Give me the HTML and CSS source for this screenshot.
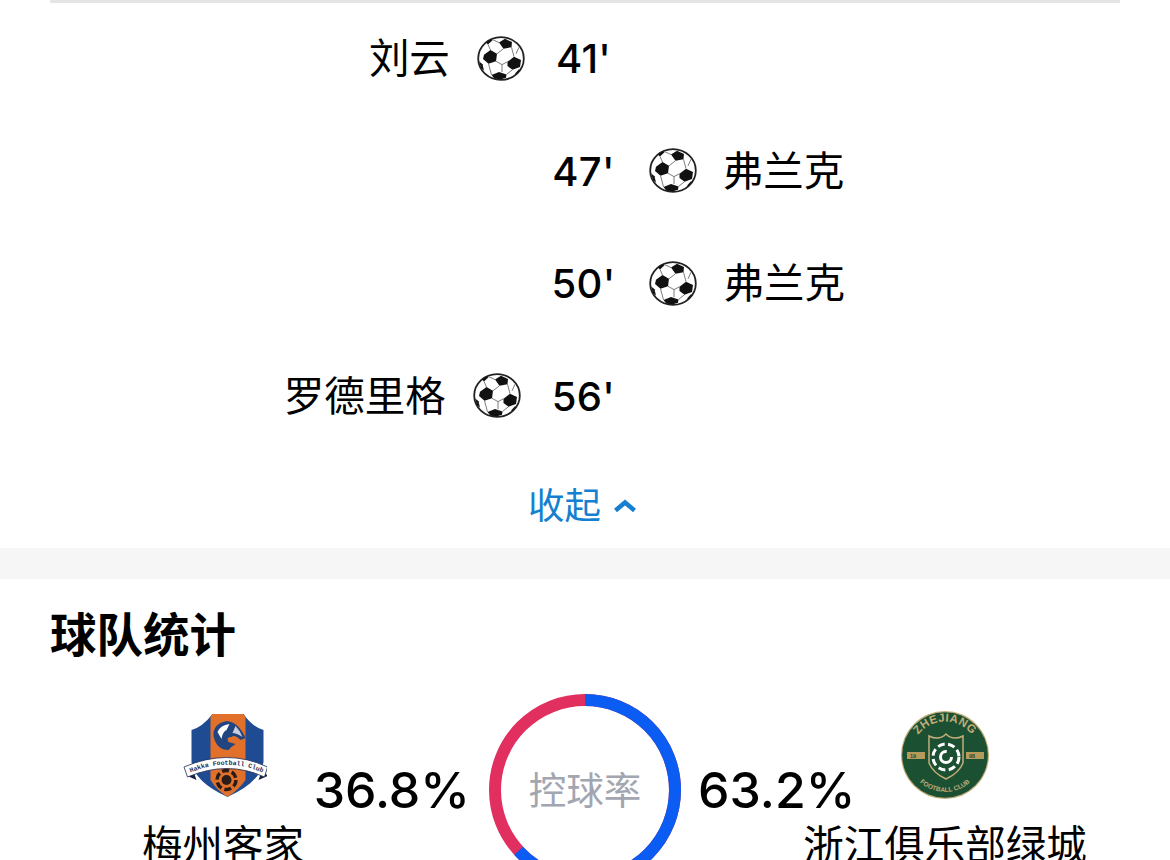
FILE: index.html
```html
<!DOCTYPE html>
<html lang="zh">
<head>
<meta charset="utf-8">
<title>球队统计</title>
<link rel="stylesheet" href="styles.css">
</head>
<body>
<svg class="defs" width="0" height="0" aria-hidden="true">
  <symbol id="ball" viewBox="0 0 48 48" preserveAspectRatio="none">
    <circle cx="24" cy="24" r="22.800" fill="#fff" stroke="#222" stroke-width="1.800"/>
    <g fill="#111">
      <path d="M22 7 28 3 35 6.500 34.500 12 26.500 13.500 Z"/>
      <path d="M7 20 13.500 15 20 19 19 27 11.500 29.500 6 24.500 Z"/>
      <path d="M30.500 27.500 37 22 44 25.500 43 33 35.500 36 30.500 32 Z"/>
      <path d="M14.500 41.500 22 38.500 29.500 41 29 44.500 24 46 17.500 45.500 Z"/>
      <path d="M2 27 4 34 7 37 5.500 30 Z"/>
      <path d="M9 7 13 4 16 4 11 9 Z"/>
      <path d="M38 40 42 35.500 43 36 39.500 40.500 Z"/>
    </g>
    <g fill="none" stroke="#555" stroke-width="0.800">
      <path d="M20 19 26.500 13.500 M34.500 12 37 22 M30.500 27.500 25 30.500 19 27 M25 30.500 25 38.500 M11.500 29.500 14.500 41.500 M35.500 36 29.500 41 M13.500 15 11 9 M22 7 16 4 M39 19 42 12"/>
    </g>
  </symbol>
</svg>

<main class="page">
  <section class="events">
    <div class="event">
      <div class="side side-home"><span class="player">刘云</span><svg class="ball"><use href="#ball"/></svg></div>
      <span class="minute">41'</span>
      <div class="side"></div>
    </div>
    <div class="event">
      <div class="side"></div>
      <span class="minute">47'</span>
      <div class="side side-away"><svg class="ball"><use href="#ball"/></svg><span class="player">弗兰克</span></div>
    </div>
    <div class="event">
      <div class="side"></div>
      <span class="minute">50'</span>
      <div class="side side-away"><svg class="ball"><use href="#ball"/></svg><span class="player">弗兰克</span></div>
    </div>
    <div class="event">
      <div class="side side-home"><span class="player">罗德里格</span><svg class="ball"><use href="#ball"/></svg></div>
      <span class="minute">56'</span>
      <div class="side"></div>
    </div>
    <div class="collapse">
      <span>收起</span>
      <svg class="chevron" viewBox="0 0 26 16"><path d="M3.500 12.500 13 4.500 22.500 12.500" fill="none" stroke="#1580d0" stroke-width="4.500"/></svg>
    </div>
  </section>

  <div class="band"></div>

  <section class="stats">
    <h2 class="stats-title">球队统计</h2>
    <div class="possession">
      <div class="team">
        <svg class="crest crest-home" viewBox="0 0 88 88">
          <g transform="translate(3.500 3)">
            <path d="M9 16 Q20 13 30 0 L61 0 Q70 13 81 16 L81 48 Q78 68 45 83 Q12 68 9 48 Z" fill="#1f4b93"/>
            <path d="M28 3 L30 0 61 0 63 3 63 66 Q56 76 45 83 Q34 76 28 66 Z" fill="#e0702a"/>
            <path d="M31 22 Q30 10 44 7 Q56 8 63 24 L58 26 Q52 20 49 23 Q43 23 46 28 L53 30 Q48 33 46 36 Q34 36 31 22 Z" fill="#22457f"/>
            <path d="M35 18 Q38 11 47 10 L44 16 Q40 18 39 25 Z" fill="#fff"/>
            <path d="M53 12 Q58 17 60 23 Q54 19 50 19 Z" fill="#c8cedb"/>
            <path d="M5 62 10 55 14 66 Z M85 62 80 55 76 66 Z" fill="#16233f"/>
            <path d="M1.500 53 Q45 34 85 53 L82 63 Q45 46 5 63 Z" fill="#fff" stroke="#1c2b52" stroke-width="0.800"/>
            <path id="bannerArc" d="M6 59.500 Q45 42 82 59.500" fill="none"/>
            <text class="crest-banner"><textPath href="#bannerArc" startOffset="50%" text-anchor="middle">Hakka Football Club</textPath></text>
            <circle cx="44" cy="66" r="9.500" fill="none" stroke="#2a1c18" stroke-width="3.500" stroke-dasharray="7 3"/>
            <circle cx="44" cy="66" r="5" fill="#2a1c18"/>
          </g>
        </svg>
        <span class="team-name">梅州客家</span>
      </div>
      <div class="percent percent-home">36.8%</div>
      <div class="ring">
        <svg class="ring-chart" viewBox="0 0 192 192">
          <circle class="ring-red" cx="96" cy="96" r="90"/>
          <circle class="ring-blue" cx="96" cy="96" r="90" pathLength="100" stroke-dasharray="63.2 36.8" transform="rotate(-90 96 96)"/>
        </svg>
        <span class="ring-label">控球率</span>
      </div>
      <div class="percent percent-away">63.2%</div>
      <div class="team">
        <svg class="crest" viewBox="0 0 88 88">
          <circle cx="44" cy="44" r="44" fill="#c2ad78"/>
          <circle cx="44" cy="44" r="42.800" fill="#1b5032"/>
          <path id="arcTop" d="M10.500 44 A33.500 33.500 0 0 1 77.500 44" fill="none"/>
          <path id="arcBottom" d="M7 44 A37 37 0 0 0 81 44" fill="none"/>
          <text class="crest-top"><textPath href="#arcTop" startOffset="50%" text-anchor="middle">ZHEJIANG</textPath></text>
          <text class="crest-bottom"><textPath href="#arcBottom" startOffset="50%" text-anchor="middle">FOOTBALL CLUB</textPath></text>
          <rect x="6" y="41" width="18" height="7" fill="#b59a5c"/>
          <rect x="65" y="41" width="18" height="7" fill="#b59a5c"/>
          <path d="M28 25 Q38 30 45 23 Q52 30 62 25 L62 52 Q58 62 45 68 Q32 62 28 52 Z" fill="#1b5032" stroke="#c2ad78" stroke-width="1.500"/>
          <text class="crest-year" x="12" y="46.500">19</text>
          <text class="crest-year" x="71" y="46.500">98</text>
          <circle cx="45" cy="46" r="13" fill="none" stroke="#fff" stroke-width="3" stroke-dasharray="7 3.500"/>
          <circle cx="45" cy="46" r="5.500" fill="none" stroke="#fff" stroke-width="3" stroke-dasharray="26 9"/>
        </svg>
        <span class="team-name">浙江俱乐部绿城</span>
      </div>
    </div>
  </section>
</main>
</body>
</html>
```

FILE: styles.css
```css
html, body {
  margin: 0;
  height: 860px;
  overflow: hidden;
  background: #fff;
}

body {
  font-family: Inter, "Noto Sans CJK SC", sans-serif;
  color: #000;
}

.defs {
  display: block;
  height: 0;
}

.page {
  display: flex;
  flex-direction: column;
}

.events {
  margin: 0 50px;
  border-top: 3px solid #e5e5e5;
  height: 545px;
  display: flex;
  flex-direction: column;
}

.event {
  height: 112.500px;
  margin-top: -1px;
  margin-bottom: 1px;
  display: grid;
  grid-template-columns: 1fr auto 1fr;
  align-items: center;
  font-size: 40px;
  line-height: 56px;
}

.side {
  display: flex;
  align-items: center;
}

.side-home {
  justify-content: flex-end;
  gap: 27px;
}

.side-away {
  gap: 26px;
}

.player {
  padding-top: 2px;
  font-size: 40.500px;
}

.minute {
  padding: 2px 34px 0 31px;
  font-weight: 450;
  letter-spacing: 0.300px;
}

.ball {
  width: 48px;
  height: 45px;
  flex: none;
}

.collapse {
  margin-top: 28px;
  display: flex;
  justify-content: center;
  align-items: center;
  gap: 11px;
  font-size: 36.500px;
  line-height: 50px;
  color: #1580d0;
  padding-right: 4px;
}

.chevron {
  width: 26px;
  height: 16px;
}

.band {
  height: 31px;
  background: #f6f6f6;
}

.stats {
  padding: 0 50px;
}

.stats-title {
  margin: 24px 0 0;
  font-size: 46.500px;
  line-height: 64px;
  font-weight: 700;
}

.possession {
  margin-top: 27px;
  display: grid;
  grid-template-columns: 176px 178px 192px 174px 180px;
  justify-content: center;
  align-items: flex-start;
}

.team {
  padding-top: 17px;
  display: flex;
  flex-direction: column;
  align-items: center;
}

.crest {
  width: 88px;
  height: 88px;
  flex: none;
}

.team-name {
  margin-top: 19px;
  font-size: 40.500px;
  line-height: 56px;
  white-space: nowrap;
}

.percent {
  height: 192px;
  display: flex;
  align-items: center;
  font-size: 50px;
  font-weight: 450;
}

.percent-home {
  justify-content: flex-end;
  padding-right: 19px;
}

.percent-away {
  padding-left: 17px;
}

.ring {
  width: 192px;
  height: 192px;
  display: grid;
  place-items: center;
}

.ring-chart {
  grid-area: 1 / 1;
  width: 192px;
  height: 192px;
}

.ring-red,
.ring-blue {
  fill: none;
  stroke-width: 12;
}

.ring-red {
  stroke: #e1305f;
}

.ring-blue {
  stroke: #0b5cf2;
}

.ring-label {
  grid-area: 1 / 1;
  font-size: 37.500px;
  line-height: 48px;
  padding-top: 2px;
  color: #a2a6b1;
}

.crest-banner {
  font: 700 6.500px "Liberation Mono", monospace;
  fill: #1c2b52;
}

.crest-top {
  font: 700 11.500px "Liberation Sans", sans-serif;
  letter-spacing: 0.500px;
  fill: #c2ad78;
}

.crest-bottom {
  font: 700 6.500px "Liberation Sans", sans-serif;
  fill: #c2ad78;
}

.crest-year {
  font: 700 5.500px "Liberation Sans", sans-serif;
  fill: #1b5032;
  text-anchor: middle;
}
```
